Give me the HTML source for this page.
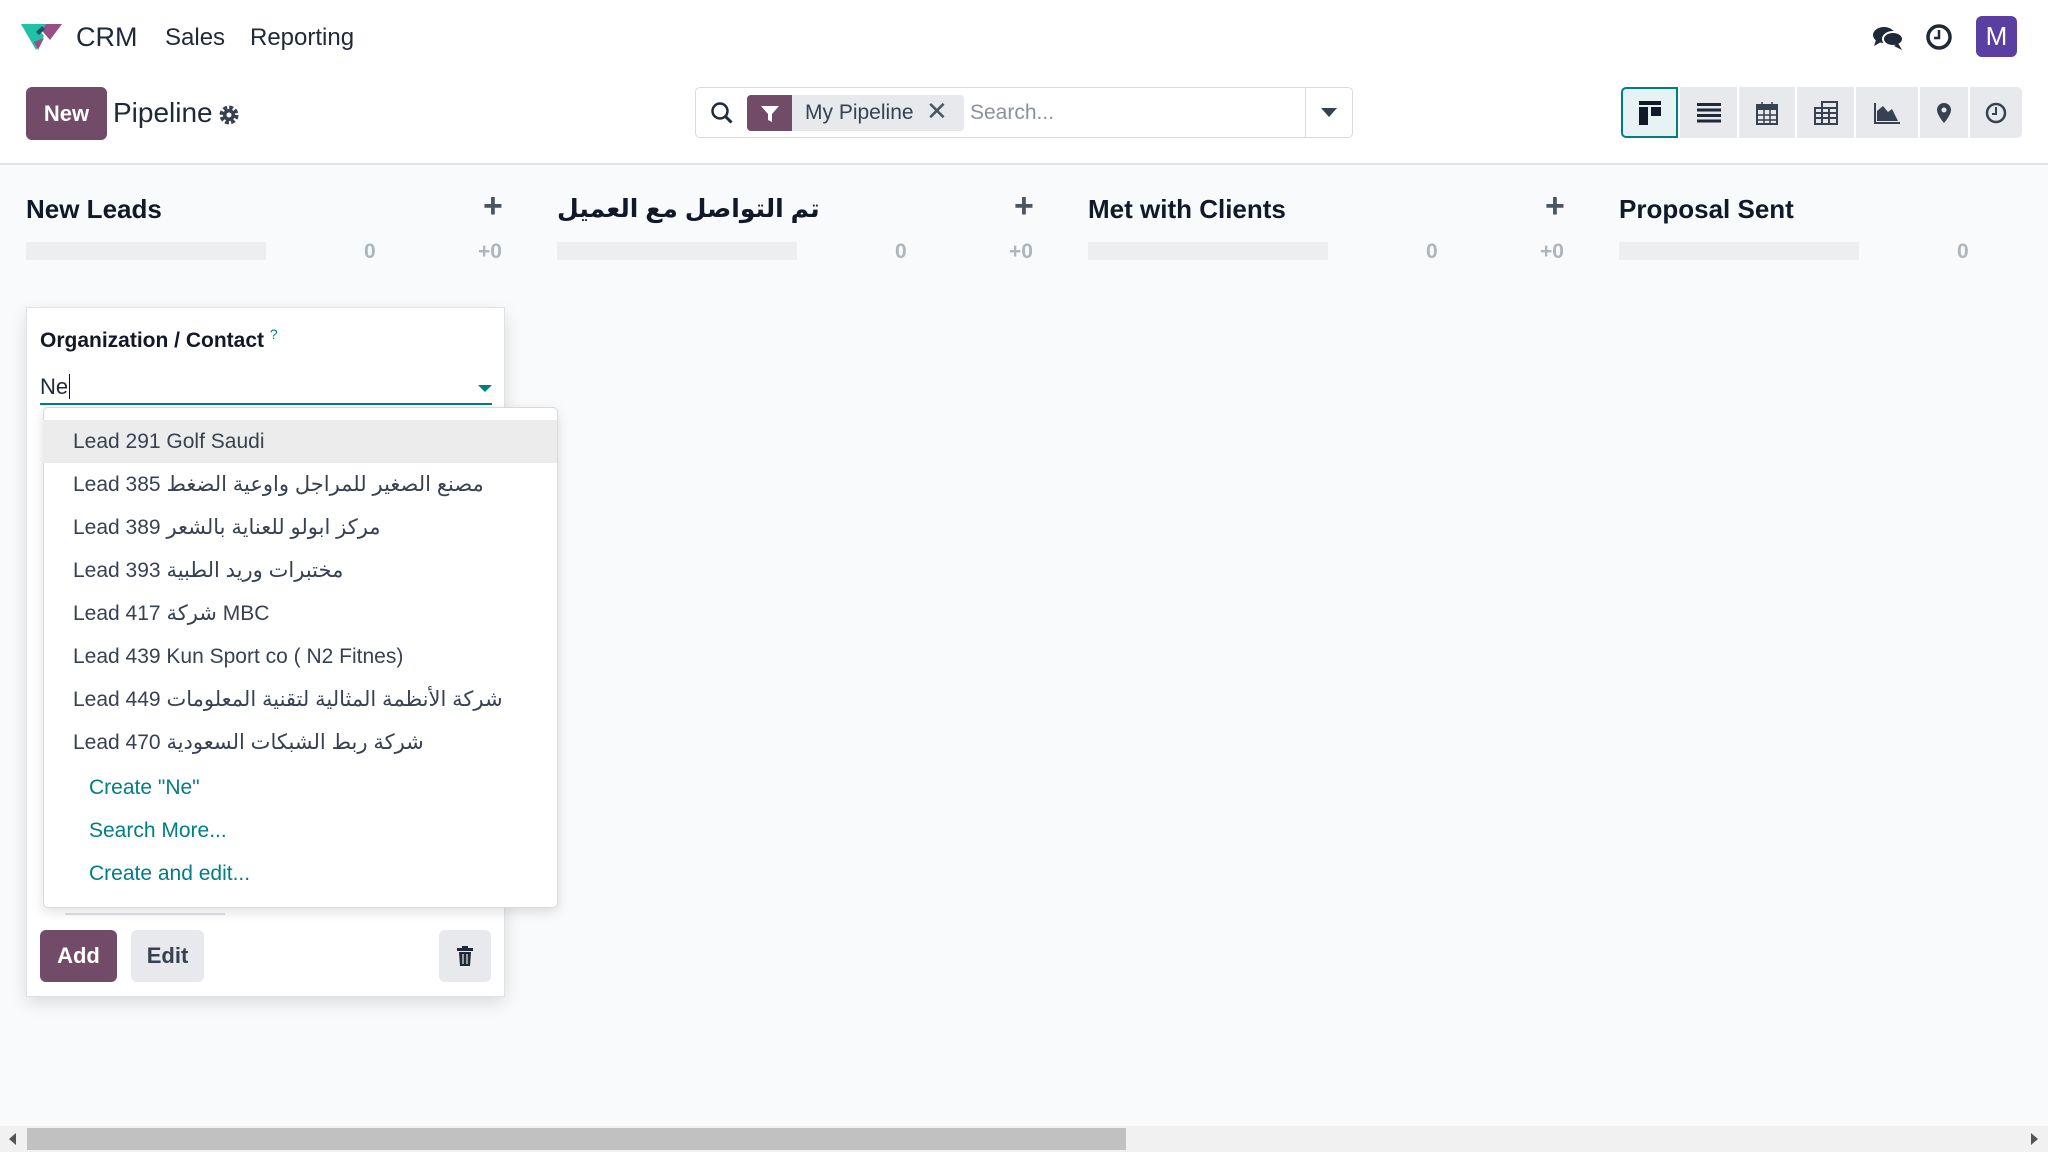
<!DOCTYPE html>
<html><head><meta charset="utf-8"><style>
*{box-sizing:border-box;margin:0;padding:0}
body{width:2048px;height:1152px;position:relative;overflow:hidden;background:#f9fafb;font-family:"Liberation Sans","DejaVu Sans",sans-serif;color:#1f2937}
.a{position:absolute}
.top{left:0;top:0;width:2048px;height:165px;background:#fff;border-bottom:2px solid #dee2e6}
.nav{font-size:24px;color:#1f2937}
.btn{display:flex;align-items:center;justify-content:center;border-radius:6px;font-size:22px;font-weight:bold}
.vs{top:87px;height:51px;background:#e7e9ed;display:flex;align-items:center;justify-content:center}
.col{font-size:26px;font-weight:bold;color:#111827}
.bar{height:18px;background:#eceef0}
.num{font-size:21px;font-weight:bold;color:#adb5bd}
.plus{font-size:34px;font-weight:bold;color:#4b5563}
.item{left:43px;width:514px;height:43px;font-size:21px;padding-left:30px;line-height:43px;color:#374151;white-space:nowrap}
.lnk{color:#017e84;padding-left:46px}
</style></head><body>
<div class="a top"></div>
<svg class="a" style="left:20px;top:22px" width="44" height="30" viewBox="0 0 44 30"><path d="M1 2h14l9 12-8 14z" fill="#21c1a8"/><path d="M16 2h26l-12 16z" fill="#9b4d85"/><path d="M12 2h14l-5 8-6 4z" fill="#21c1a8"/><path d="M16 10l6-6 3 3-6 6z" fill="#14576b"/><path d="M14 20l10-4-6 12z" fill="#9b4d85"/></svg>
<div class="a nav" style="left:76px;top:22px;font-size:27px">CRM</div>
<div class="a nav" style="left:165px;top:24px">Sales</div>
<div class="a nav" style="left:250px;top:24px">Reporting</div>
<svg class="a" style="left:1872px;top:24px" width="32" height="28" viewBox="0 0 32 28"><ellipse cx="12" cy="11" rx="11" ry="8" fill="#1f2937"/><path d="M4 16l-2 6 7-4z" fill="#1f2937"/><ellipse cx="21" cy="15" rx="10" ry="7" fill="#1f2937" stroke="#fff" stroke-width="2"/><path d="M26 19l4 7-8-4z" fill="#1f2937"/></svg>
<svg class="a" style="left:1925px;top:23px" width="28" height="28" viewBox="0 0 28 28"><circle cx="14" cy="14" r="11" fill="none" stroke="#1f2937" stroke-width="3.5"/><path d="M14 7v8h-5" fill="none" stroke="#1f2937" stroke-width="2.5"/></svg>
<div class="a btn" style="left:1976px;top:16px;width:41px;height:41px;background:#5a3ea1;color:#fff;font-weight:normal;font-size:26px">M</div>
<div class="a btn" style="left:26px;top:87px;width:81px;height:53px;background:#714b67;color:#fff">New</div>
<div class="a" style="left:113px;top:97px;font-size:28px;color:#1f2937">Pipeline</div>
<svg class="a" style="left:218px;top:104px" width="22" height="22" viewBox="0 0 22 22"><circle cx="11" cy="11" r="7" fill="none" stroke="#374151" stroke-width="5" stroke-dasharray="3.5 2"/><circle cx="11" cy="11" r="6" fill="#374151"/><circle cx="11" cy="11" r="2.5" fill="#fff"/></svg>
<div class="a" style="left:695px;top:87px;width:658px;height:51px;background:#fff;border:1.5px solid #d8dadd;border-radius:5px"></div>
<div class="a" style="left:1305px;top:88px;width:1px;height:49px;background:#d8dadd"></div>
<svg class="a" style="left:710px;top:101px" width="24" height="24" viewBox="0 0 24 24"><circle cx="10" cy="10" r="7.5" fill="none" stroke="#1f2937" stroke-width="2.5"/><path d="M15.5 15.5l6 6" stroke="#1f2937" stroke-width="3"/></svg>
<div class="a" style="left:747px;top:95px;width:217px;height:36px;background:#e7e9ed;border-radius:4px"></div>
<div class="a" style="left:747px;top:95px;width:45px;height:36px;background:#714b67;border-radius:4px 0 0 4px"></div>
<svg class="a" style="left:760px;top:104px" width="20" height="20" viewBox="0 0 20 20"><path d="M1 2h18l-7 8v8l-4-2v-6z" fill="#fff"/></svg>
<div class="a" style="left:805px;top:101px;font-size:21px;color:#374151">My Pipeline</div>
<div class="a" style="left:926px;top:96px;font-size:26px;color:#4b5563">✕</div>
<div class="a" style="left:970px;top:101px;font-size:21px;color:#8a919a">Search...</div>
<svg class="a" style="left:1321px;top:108px" width="16" height="10"><path d="M0 0h16l-8 9z" fill="#374151"/></svg>
<div class="a vs" style="left:1621px;width:57px;background:#e6f2f3;border:2px solid #017e84;border-radius:5px 0 0 5px"><svg width="22" height="24"><rect x="0" y="0" width="22" height="4" fill="#111827"/><rect x="0" y="6" width="9" height="18" fill="#111827"/><rect x="12" y="6" width="10" height="9" fill="#111827"/></svg></div>
<div class="a vs" style="left:1680px;width:57px"><svg width="24" height="20"><g fill="#1f2937"><rect y="0" width="24" height="3"/><rect y="5.5" width="24" height="3"/><rect y="11" width="24" height="3"/><rect y="16.5" width="24" height="3"/></g></svg></div>
<div class="a vs" style="left:1739px;width:56px"><svg width="22" height="24"><rect x="1" y="4" width="20" height="19" fill="none" stroke="#374151" stroke-width="2"/><rect x="1" y="4" width="20" height="5" fill="#374151"/><path d="M6 1v6M16 1v6M1 14h20M1 19h20M8 9v14M14 9v14" stroke="#374151" stroke-width="1.5"/></svg></div>
<div class="a vs" style="left:1797px;width:57px"><svg width="24" height="24"><rect x="1" y="7" width="22" height="16" fill="none" stroke="#374151" stroke-width="2"/><rect x="8" y="1" width="15" height="6" fill="none" stroke="#374151" stroke-width="2"/><path d="M1 12h22M1 17h22M8 7v16M15 7v16" stroke="#374151" stroke-width="2"/></svg></div>
<div class="a vs" style="left:1856px;width:62px"><svg width="28" height="24"><path d="M2 2v20h25" fill="none" stroke="#374151" stroke-width="2"/><path d="M4 20V10l6-5 5 6 4-3 6 12z" fill="#374151"/></svg></div>
<div class="a vs" style="left:1920px;width:48px"><svg width="16" height="22"><path d="M8 1a7 7 0 0 1 7 7c0 5-7 13-7 13S1 13 1 8a7 7 0 0 1 7-7z" fill="#374151"/><circle cx="8" cy="8" r="2.5" fill="#e7e9ed"/></svg></div>
<div class="a vs" style="left:1970px;width:52px;border-radius:0 5px 5px 0"><svg width="22" height="22"><circle cx="11" cy="11" r="9" fill="none" stroke="#374151" stroke-width="2.5"/><path d="M11 5v7h-4" fill="none" stroke="#374151" stroke-width="2"/></svg></div>

<div class="a col" style="left:26px;top:194px">New Leads</div>
<div class="a col" style="left:557px;top:194px;font-size:25px">تم التواصل مع العميل</div>
<div class="a col" style="left:1088px;top:194px">Met with Clients</div>
<div class="a col" style="left:1619px;top:194px">Proposal Sent</div>
<div class="a plus" style="left:483px;top:187px">+</div>
<div class="a plus" style="left:1014px;top:187px">+</div>
<div class="a plus" style="left:1545px;top:187px">+</div>
<div class="a bar" style="left:26px;top:242px;width:240px"></div>
<div class="a bar" style="left:557px;top:242px;width:240px"></div>
<div class="a bar" style="left:1088px;top:242px;width:240px"></div>
<div class="a bar" style="left:1619px;top:242px;width:240px"></div>
<div class="a num" style="left:364px;top:240px">0</div><div class="a num" style="left:478px;top:240px">+0</div>
<div class="a num" style="left:895px;top:240px">0</div><div class="a num" style="left:1009px;top:240px">+0</div>
<div class="a num" style="left:1426px;top:240px">0</div><div class="a num" style="left:1540px;top:240px">+0</div>
<div class="a num" style="left:1957px;top:240px">0</div>

<div class="a" style="left:26px;top:307px;width:479px;height:690px;background:#fff;border:1.5px solid #dee2e6;box-shadow:0 6px 16px rgba(0,0,0,.12)"></div>
<div class="a" style="left:40px;top:326px;font-size:21px;font-weight:bold;color:#111827">Organization / Contact <sup style="color:#017e84;font-size:14px;font-weight:normal">?</sup></div>
<div class="a" style="left:40px;top:374px;font-size:22px;color:#1f2937">Ne<span style="border-left:1.5px solid #111;margin-left:1px"></span></div>
<svg class="a" style="left:478px;top:385px" width="14" height="8"><path d="M0 0h14l-7 7z" fill="#017e84"/></svg>
<div class="a" style="left:40px;top:403px;width:452px;height:2px;background:#017e84"></div>
<div class="a" style="left:65px;top:913px;width:160px;height:1.5px;background:#dee2e6"></div>
<div class="a" style="left:43px;top:407px;width:515px;height:501px;background:#fff;border:1.5px solid #d8dadd;border-radius:5px;box-shadow:0 4px 12px rgba(0,0,0,.12)"></div>
<div class="a item" style="top:420px;background:#ececec">Lead 291 Golf Saudi</div>
<div class="a item" style="top:463px">Lead 385 مصنع الصغير للمراجل واوعية الضغط</div>
<div class="a item" style="top:506px">Lead 389 مركز ابولو للعناية بالشعر</div>
<div class="a item" style="top:549px">Lead 393 مختبرات وريد الطبية</div>
<div class="a item" style="top:592px">Lead 417 شركة MBC</div>
<div class="a item" style="top:635px">Lead 439 Kun Sport co ( N2 Fitnes)</div>
<div class="a item" style="top:678px">Lead 449 شركة الأنظمة المثالية لتقنية المعلومات</div>
<div class="a item" style="top:721px">Lead 470 شركة ربط الشبكات السعودية</div>
<div class="a item lnk" style="top:766px">Create "Ne"</div>
<div class="a item lnk" style="top:809px">Search More...</div>
<div class="a item lnk" style="top:852px">Create and edit...</div>
<div class="a btn" style="left:40px;top:930px;width:77px;height:52px;background:#714b67;color:#fff">Add</div>
<div class="a btn" style="left:131px;top:930px;width:73px;height:52px;background:#e7e9ed;color:#374151">Edit</div>
<div class="a btn" style="left:439px;top:930px;width:52px;height:52px;background:#e7e9ed"><svg width="16" height="20"><rect x="0" y="2" width="16" height="3" fill="#1f2937"/><rect x="5" y="0" width="6" height="3" fill="#1f2937"/><path d="M2 6h12l-1 14H3z" fill="#1f2937"/><path d="M6 8v10M10 8v10" stroke="#e7e9ed" stroke-width="1.2"/></svg></div>

<div class="a" style="left:0;top:1126px;width:2048px;height:26px;background:#f1f1f1"></div>
<div class="a" style="left:27px;top:1128px;width:1099px;height:22px;background:#c1c1c1"></div>
<svg class="a" style="left:9px;top:1133px" width="8" height="12"><path d="M7 0v12L0 6z" fill="#555"/></svg>
<svg class="a" style="left:2031px;top:1133px" width="8" height="12"><path d="M0 0v12l7-6z" fill="#555"/></svg>
</body></html>
